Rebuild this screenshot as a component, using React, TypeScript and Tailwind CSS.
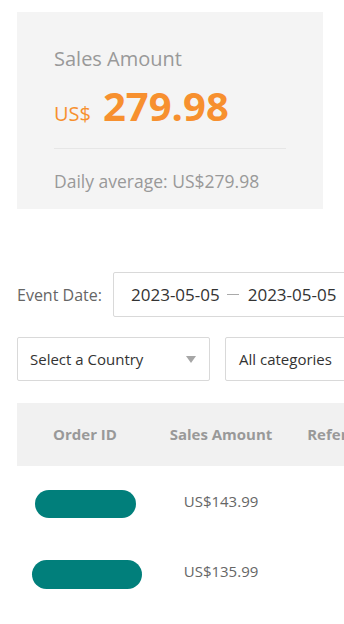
import React from "react";

export default function App() {
  return (
    <div className="w-[344px] h-[624px] overflow-hidden bg-white pl-[17px] pt-[12px]" style={{ fontFamily: '"Open Sans", sans-serif' }}>
      <div className="w-[306px] h-[197px] bg-[#f4f4f4] px-[37px] pt-[35px]">
        <div className="text-[20px] leading-[24px] text-[#999999]">Sales Amount</div>
        <div className="flex items-baseline mt-[15px] h-[40px] text-[#f7902f]">
          <span className="text-[20px] leading-none">US$</span>
          <span className="ml-[12px] text-[40px] font-bold leading-none">279.98</span>
        </div>
        <div className="mt-[22px] h-px bg-[#e6e6e6]" />
        <div className="mt-[22px] text-[17.5px] leading-[20px] text-[#999999]">Daily average: US$279.98</div>
      </div>

      <div className="mt-[63px] flex items-center">
        <div className="w-[96px] shrink-0 whitespace-nowrap text-[16px] text-[#666666]">Event Date:</div>
        <div className="w-[260px] h-[45px] shrink-0 border border-[#d9d9d9] rounded-[2px] flex items-center pl-[17px] text-[17px] text-[#333333]">
          <span>2023-05-05</span>
          <span className="ml-[7px] mr-[9px] w-[12px] h-px bg-[#aaaaaa]" />
          <span>2023-05-05</span>
        </div>
      </div>

      <div className="mt-[20px] flex gap-[15px]">
        <div className="w-[193px] h-[44px] shrink-0 border border-[#d9d9d9] rounded-[2px] flex items-center justify-between pl-[12px] pr-[13px] text-[15px] text-[#333333]">
          <span>Select a Country</span>
          <span className="w-0 h-0 border-l-[5px] border-r-[5px] border-t-[7px] border-l-transparent border-r-transparent border-t-[#a6a6a6]" />
        </div>
        <div className="w-[160px] h-[44px] shrink-0 border border-[#d9d9d9] rounded-[2px] flex items-center pl-[13px] text-[15px] text-[#333333]">
          <span>All categories</span>
        </div>
      </div>

      <div className="mt-[22px] w-[384px]">
        <div className="h-[63px] bg-[#f1f1f1] grid grid-cols-[136px_136px_112px] items-center text-[15px] font-bold text-[#999999]">
          <div className="text-center">Order ID</div>
          <div className="text-center">Sales Amount</div>
          <div className="text-center whitespace-nowrap">Reference</div>
        </div>
        <div className="h-[70px] grid grid-cols-[136px_136px_112px] items-center text-[15px] text-[#666666]">
          <div className="flex justify-center"><div className="w-[101px] h-[28px] rounded-full bg-[#017f7b] mt-[6px]" /></div>
          <div className="text-center">US$143.99</div>
          <div />
        </div>
        <div className="h-[70px] grid grid-cols-[136px_136px_112px] items-center text-[15px] text-[#666666]">
          <div className="flex justify-center"><div className="w-[110px] h-[29px] rounded-full bg-[#017f7b] ml-[4px] mt-[6px]" /></div>
          <div className="text-center">US$135.99</div>
          <div />
        </div>
      </div>
    </div>
  );
}
